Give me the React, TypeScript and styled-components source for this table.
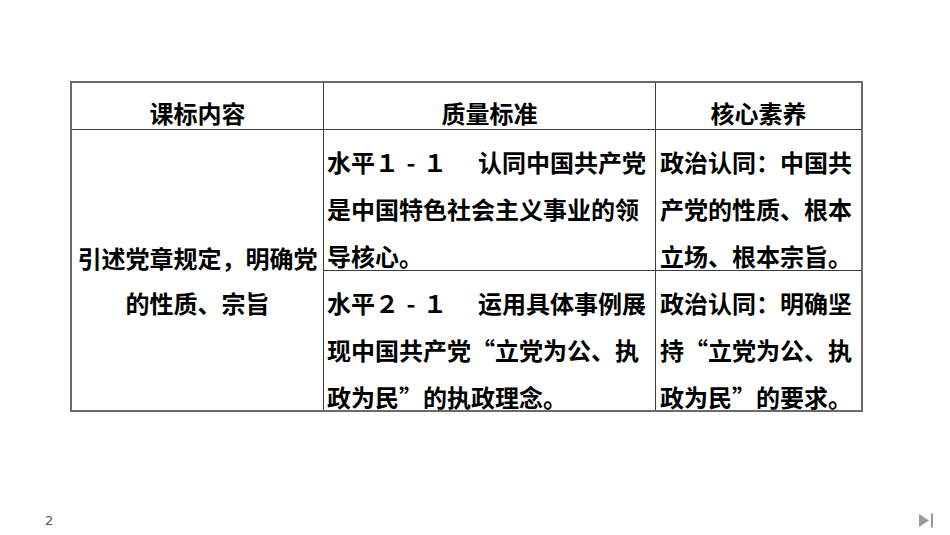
import React from "react";
import styled, { createGlobalStyle } from "styled-components";

const GlobalStyle = createGlobalStyle`
  html, body {
    margin: 0;
    padding: 0;
    background: #fff;
  }
`;

const Slide = styled.div`
  width: 950px;
  height: 535px;
  box-sizing: border-box;
  display: flex;
  flex-direction: column;
  padding: 81px 0 0 70px;
  background: #fff;
  font-family: "Noto Sans CJK SC", "Noto Sans", sans-serif;
  color: #000;
  overflow: hidden;
`;

const Table = styled.div`
  display: grid;
  grid-template-columns: 252px 332px 205px;
  grid-template-rows: 47px 141px 139px;
  width: 793px;
  box-sizing: border-box;
  border: 2px solid #6a6a6a;
`;

const Cell = styled.div<{ $last?: boolean; $bottom?: boolean }>`
  box-sizing: border-box;
  border-right: ${(p) => (p.$last ? "none" : "1px solid #3c3c3c")};
  border-bottom: ${(p) => (p.$bottom ? "none" : "1px solid #3c3c3c")};
  font-size: 24px;
  font-weight: 700;
  min-width: 0;
`;

const HeadCell = styled(Cell)`
  text-align: center;
  line-height: 26px;
  padding-top: 17px;
`;

const TopicCell = styled(Cell)`
  grid-row: 2 / span 2;
  display: flex;
  flex-direction: column;
  justify-content: center;
  align-items: center;
  padding-top: 20px;
  line-height: 45px;
  border-bottom: none;
`;

const TextCell = styled(Cell)<{ $pad: number }>`
  padding: 8px 0 0 ${(p) => p.$pad}px;
  line-height: 47px;
  overflow: visible;
`;

const Line = styled.div`
  white-space: nowrap;
`;

const Dash = styled.span`
  display: inline-block;
  width: 1em;
  text-align: center;
`;

const Gap = styled.span`
  display: inline-block;
  width: 31px;
`;

const Footer = styled.div`
  margin-top: auto;
  margin-left: -70px;
  display: flex;
  align-items: center;
  justify-content: space-between;
  padding: 0 16px 7px 45px;
`;

const PageNo = styled.span`
  font-family: "DejaVu Sans", sans-serif;
  font-size: 13px;
  color: #555;
`;

const NavIcon = () => (
  <svg width="16" height="15" viewBox="0 0 16 15">
    <polygon points="1,1 11,7.5 1,14" fill="#9a9a9a" />
    <rect x="13" y="0.5" width="2" height="14" fill="#9a9a9a" />
  </svg>
);

const levelRows = [
  {
    level: ["１", "１"],
    lines: ["认同中国共产党", "是中国特色社会主义事业的领", "导核心。"],
    literacy: ["政治认同：中国共", "产党的性质、根本", "立场、根本宗旨。"],
  },
  {
    level: ["２", "１"],
    lines: ["运用具体事例展", "现中国共产党“立党为公、执", "政为民”的执政理念。"],
    literacy: ["政治认同：明确坚", "持“立党为公、执", "政为民”的要求。"],
  },
];

export default function App() {
  return (
    <>
      <GlobalStyle />
      <Slide lang="zh-CN">
        <Table>
          <HeadCell>课标内容</HeadCell>
          <HeadCell>质量标准</HeadCell>
          <HeadCell $last>核心素养</HeadCell>

          <TopicCell>
            <Line>引述党章规定，明确党</Line>
            <Line>的性质、宗旨</Line>
          </TopicCell>

          {levelRows.map((row, i) => (
            <React.Fragment key={i}>
              <TextCell $pad={3} $bottom={i === levelRows.length - 1}>
                <Line>
                  水平{row.level[0]}
                  <Dash>-</Dash>
                  {row.level[1]}
                  <Gap />
                  {row.lines[0]}
                </Line>
                {row.lines.slice(1).map((l) => (
                  <Line key={l}>{l}</Line>
                ))}
              </TextCell>
              <TextCell $pad={4} $last $bottom={i === levelRows.length - 1}>
                {row.literacy.map((l) => (
                  <Line key={l}>{l}</Line>
                ))}
              </TextCell>
            </React.Fragment>
          ))}
        </Table>

        <Footer>
          <PageNo>2</PageNo>
          <NavIcon />
        </Footer>
      </Slide>
    </>
  );
}
